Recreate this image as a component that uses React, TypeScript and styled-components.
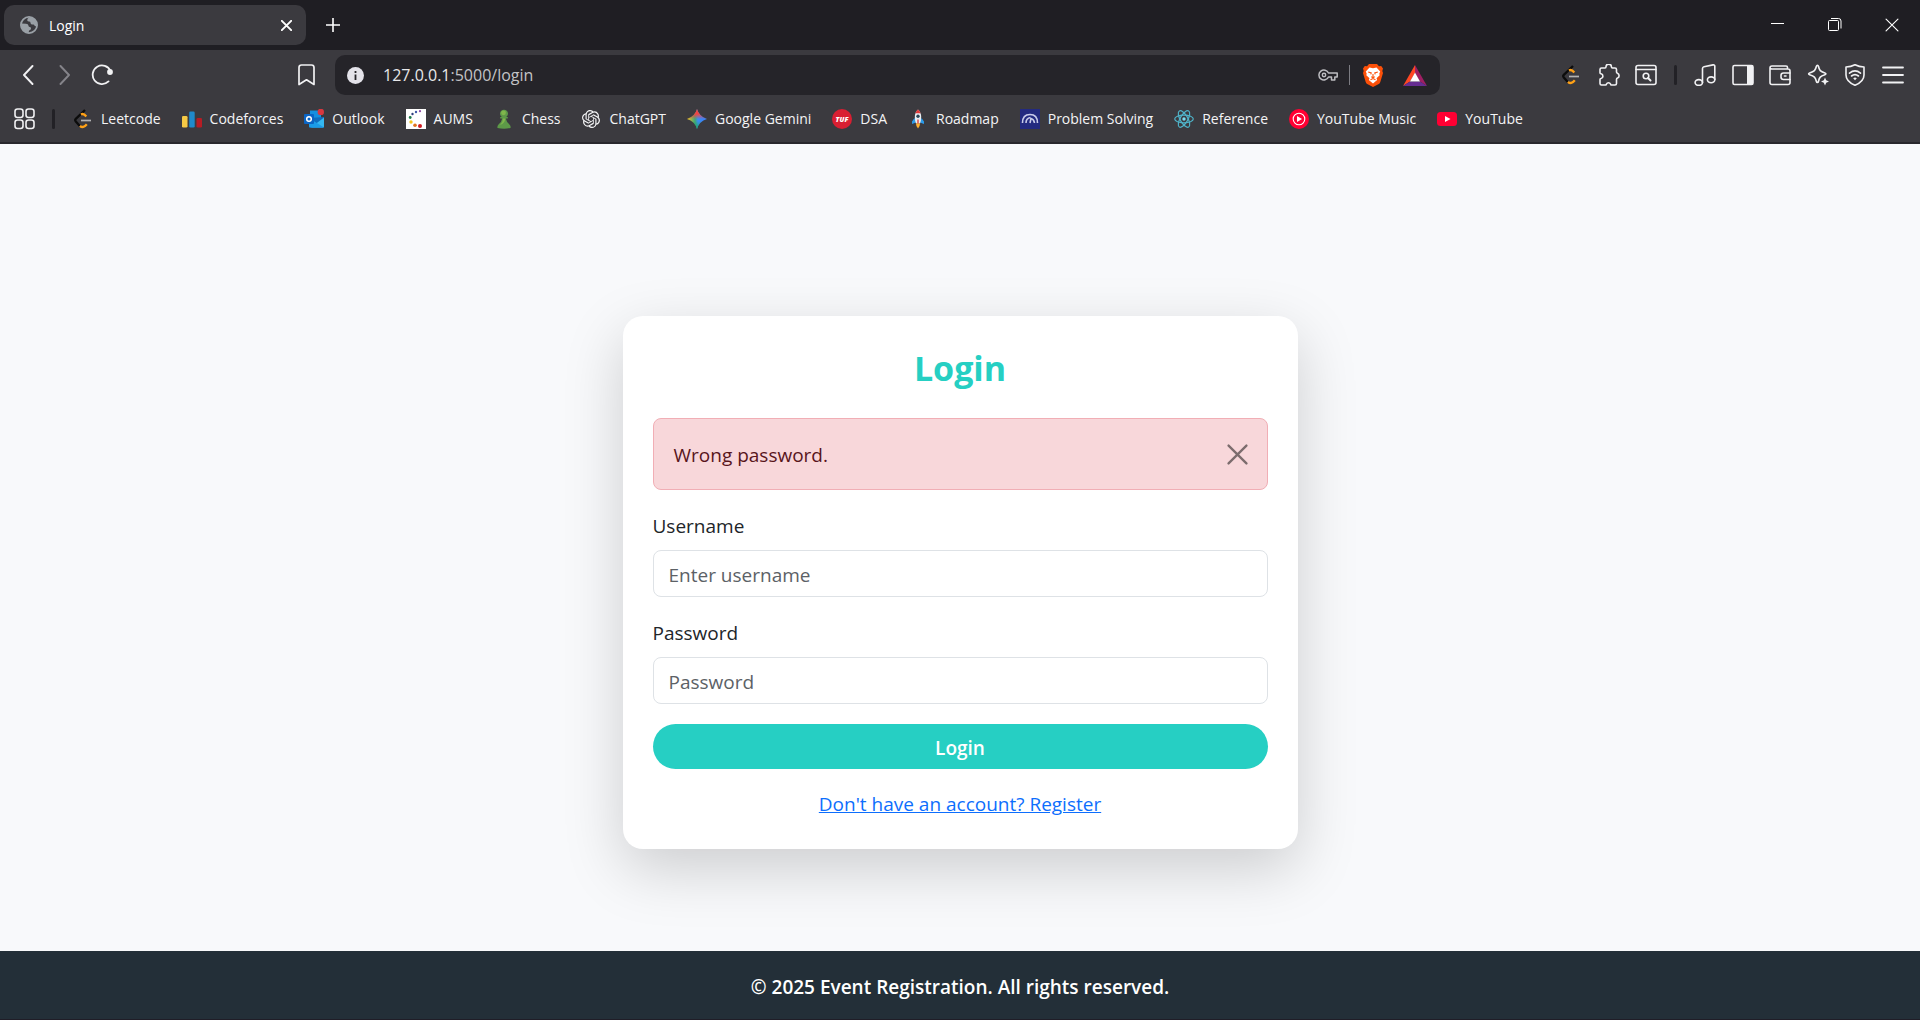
import React, { useState } from "react";
import styled, { createGlobalStyle } from "styled-components";
import { SiOpenai } from "react-icons/si";

const fontStack = `"Open Sans", "Noto Sans", sans-serif`;

const GlobalStyle = createGlobalStyle`
  *, *::before, *::after { box-sizing: border-box; }
  body { margin: 0; background: #f8f9fa; font-family: ${fontStack}; }
  button, input { font: inherit; margin: 0; }
  button { padding: 0; border: 0; background: none; color: inherit; cursor: pointer; }
  svg { display: block; flex: none; }
`;

const Window = styled.div`
  display: flex;
  flex-direction: column;
  min-height: 100vh;
  border-bottom: 1px solid #1f1d27;
`;

/* ---------- browser chrome ---------- */

const TabStrip = styled.div`
  display: flex;
  align-items: center;
  height: 50px;
  padding-left: 4px;
  background: #1f1e23;
  color: #fff;
`;

const Tab = styled.div`
  display: flex;
  align-items: center;
  gap: 11px;
  width: 302px;
  height: 40px;
  padding: 0 12px 0 16px;
  border-radius: 10px;
  background: #3b3a3f;
  font-size: 14px;
`;

const TabTitle = styled.span`
  flex: 1;
`;

const SmallButton = styled.button`
  display: grid;
  place-items: center;
  width: 16px;
  height: 20px;
`;

const NewTabButton = styled.button`
  display: grid;
  place-items: center;
  width: 54px;
  height: 40px;
`;

const WindowControls = styled.div`
  display: flex;
  margin-left: auto;
`;

const WindowButton = styled.button`
  display: grid;
  place-items: center;
  width: 57px;
  height: 50px;
`;

const Toolbar = styled.div`
  display: grid;
  grid-template-columns: 320px 1fr 480px;
  align-items: center;
  height: 50px;
  padding-left: 15px;
  background: #3b3a3f;
  color: #f1f1f3;
`;

const NavGroup = styled.div`
  display: flex;
  align-items: center;
  gap: 11px;
`;

const NavButton = styled.button<{ $dim?: boolean; $end?: boolean }>`
  display: grid;
  place-items: center;
  width: 26px;
  height: 30px;
  color: ${(p) => (p.$dim ? "#85848a" : "#f1f1f3")};
  margin-left: ${(p) => (p.$end ? "auto" : "0")};
  margin-right: ${(p) => (p.$end ? "16px" : "0")};
`;

const AddressBar = styled.div`
  display: flex;
  align-items: center;
  height: 40px;
  padding: 0 13px 0 12px;
  border-radius: 10px;
  background: #252429;
`;

const Url = styled.div`
  flex: 1;
  padding-left: 19px;
  font-size: 16px;
  color: #c3c3c6;
`;

const UrlHost = styled.span`
  color: #e8e8ea;
`;

const AddressActions = styled.div`
  display: flex;
  align-items: center;
  gap: 11px;
`;

const AddressDivider = styled.span`
  width: 1px;
  height: 20px;
  background: #7c7c82;
`;

const Rewards = styled.span`
  padding-left: 7px;
`;

const ToolGroups = styled.div`
  display: flex;
  align-items: center;
  justify-content: flex-end;
  padding-right: 16px;
`;

const ToolGroup = styled.div<{ $width: number }>`
  display: flex;
  justify-content: space-between;
  width: ${(p) => p.$width}px;
`;

const ToolButton = styled.button`
  display: grid;
  place-items: center;
  width: 22px;
  height: 22px;
`;

const Divider = styled.span<{ $gap: number }>`
  width: 3px;
  height: 20px;
  margin: 0 ${(p) => p.$gap}px;
  border-radius: 2px;
  background: #222126;
`;

const BookmarkBar = styled.nav`
  display: flex;
  align-items: center;
  height: 44px;
  padding: 0 14px 4px;
  border-bottom: 2px solid #29282d;
  background: #3b3a3f;
  color: #f1f1f3;
`;

const Bookmarks = styled.div`
  display: flex;
  gap: 21px;
  padding-left: 2px;
`;

const Bookmark = styled.a`
  display: flex;
  align-items: center;
  gap: 8px;
  color: #f4f4f6;
  font-size: 14px;
  line-height: 20px;
  text-decoration: none;
  white-space: nowrap;
`;

const BookmarkIconBox = styled.span`
  display: grid;
  place-items: center;
  width: 20px;
  height: 20px;
`;

/* ---------- login page ---------- */

const Page = styled.main`
  flex: 1;
  display: flex;
  flex-direction: column;
  align-items: center;
  padding: 172px 20px 102px;
  background: #f8f9fb;
  color: #212529;
  font-size: 19px;
  line-height: 30px;
`;

const Card = styled.form`
  width: 100%;
  max-width: 675px;
  padding: 30px;
  border-radius: 20px;
  background: #fff;
  box-shadow: 0 20px 60px rgba(0, 0, 0, 0.176);
`;

const Title = styled.h2`
  margin: 0 0 28px;
  color: #26cfc3;
  font-size: 34px;
  font-weight: 700;
  line-height: 44px;
  text-align: center;
`;

const Alert = styled.div`
  display: flex;
  align-items: center;
  justify-content: space-between;
  padding: 21px 19px 19px 20px;
  margin-bottom: 20px;
  border: 1px solid #f1aeb5;
  border-radius: 8px;
  background: #f8d7da;
  color: #58151c;
`;

const DismissButton = styled.button`
  padding-bottom: 2px;
  color: #7c6c6d;
`;

const Field = styled.div`
  margin-bottom: 20px;
`;

const Label = styled.label`
  display: block;
  padding-top: 1px;
  margin-bottom: 9px;
`;

const Input = styled.input`
  display: block;
  width: 100%;
  height: 47px;
  padding: 2px 15px 0;
  border: 1px solid #dee2e6;
  border-radius: 8px;
  background: #fff;
  color: #212529;
  &::placeholder {
    color: #5c6166;
    opacity: 1;
  }
`;

const SubmitButton = styled.button`
  display: block;
  width: 100%;
  height: 45px;
  padding-top: 2px;
  margin-bottom: 20px;
  border-radius: 24px;
  background: #26cfc3;
  color: #fff;
  font-weight: 600;
`;

const RegisterLine = styled.p`
  margin: 0;
  text-align: center;
`;

const RegisterLink = styled.a`
  color: #0d6efd;
`;

const Footer = styled.footer`
  padding: 21px 20px 17px;
  background: #232f38;
  color: #fff;
  font-size: 19px;
  font-weight: 600;
  line-height: 30px;
  text-align: center;
`;

/* ---------- icons ---------- */

const line = {
  fill: "none",
  stroke: "currentColor",
  strokeWidth: 1.6,
  strokeLinecap: "round" as const,
  strokeLinejoin: "round" as const,
};

const GlobeIcon = () => (
  <svg width="18" height="18" viewBox="0 0 18 18">
    <circle cx="9" cy="9" r="8.100" fill="#3b3a3f" stroke="#9aa0a6" strokeWidth="1.800" />
    <path
      d="M9.500 1Q7 2.500 7.200 4.200 7.500 5.500 9 5.500q1.500 0 1.500 1.300 0 1.500 1.500 1.700h1.500q1 .2 1.200 1.500L17 10.500Q18 3 9.500 1z"
      fill="#9aa0a6"
    />
    <path
      d="M1 7.500l5 .2q2.300.2 2.500 2 .1 1.300 1.400 1.400 1.300.2 1.100 1.600-.3 1.300-1.500 1.500-.8.300-.8 2.800Q1 16.500 1 7.500z"
      fill="#9aa0a6"
    />
  </svg>
);

const CrossIcon = ({ size, width }: { size: number; width: number }) => (
  <svg width={size} height={size} viewBox="0 0 20 20">
    <path d="M1.500 1.500l17 17M18.500 1.500l-17 17" {...line} strokeWidth={width} />
  </svg>
);

const PlusIcon = () => (
  <svg width="14" height="14" viewBox="0 0 14 14">
    <path d="M7 0v14M0 7h14" {...line} strokeLinecap="butt" />
  </svg>
);

const MinimizeIcon = () => (
  <svg width="14" height="14" viewBox="0 0 14 14">
    <path d="M0 5.500h13" stroke="#fff" />
  </svg>
);

const RestoreIcon = () => (
  <svg width="14" height="14" viewBox="0 0 14 14" fill="none" stroke="#fff">
    <rect x=".5" y="2.500" width="10" height="10" rx="1" />
    <path d="M3 .5h7.500q2.500 0 2.500 2.500v7.500" />
  </svg>
);

const BackIcon = ({ flip }: { flip?: boolean }) => (
  <svg width="12" height="20" viewBox="0 0 12 20">
    <path d={flip ? "M1.500 1L10 10l-8.500 9" : "M10.500 1L2 10l8.500 9"} {...line} strokeWidth={1.9} />
  </svg>
);

const ReloadIcon = () => (
  <svg width="22" height="22" viewBox="0 0 22 22">
    <path d="M19.500 7A9.300 9.300 0 1 0 17.500 17.400" {...line} strokeWidth={1.8} />
    <circle cx="19" cy="8" r="2.900" fill="currentColor" />
  </svg>
);

const BookmarkIcon = () => (
  <svg width="17" height="22" viewBox="0 0 17 22">
    <path d="M1 3.500Q1 1 3.500 1h10Q16 1 16 3.500V20.500l-7.500-4.700L1 20.500z" {...line} strokeWidth={1.7} />
  </svg>
);

const InfoIcon = () => (
  <svg width="17" height="17" viewBox="0 0 17 17">
    <circle cx="8.500" cy="8.500" r="8.500" fill="#e4e3ea" />
    <path d="M8.500 7.500v5.500M8.500 4v2" stroke="#252429" strokeWidth="1.800" />
  </svg>
);

const KeyIcon = () => (
  <svg width="20" height="12" viewBox="0 0 20 12">
    <path
      d="M10.500 4A5 5 0 1 0 10.500 8H13.500V11H16.800V8H19.200V4Z"
      {...line}
      stroke="#bdbdc1"
      strokeWidth={1.500}
    />
    <circle cx="6" cy="6" r="1.700" fill="none" stroke="#bdbdc1" strokeWidth="1.400" />
  </svg>
);

const BraveIcon = () => (
  <svg width="24" height="24" viewBox="0 0 24 24">
    <path
      d="M8 1h8l2 2.200 2.200-.2L22 5.500 21.300 8l.7 2-2.700 9q-.4 1.300-1.500 2L12 24l-5.800-3q-1.100-.7-1.500-2L2 10l.7-2L2 5.500 3.800 3l2.200.2z"
      fill="#fb5009"
    />
    <path
      d="M8.500 4.500l3.500.7 3.500-.7 3.700 4-.9 2.200.4 1.600-3.200 2.900.7 1.800L12 20.500 7.800 17l.7-1.800-3.200-2.900.4-1.600-.9-2.200z"
      fill="#fff"
    />
    <path
      d="M7.200 9l3 .9-.4 1.500M16.800 9l-3 .9.4 1.500M12 11v3M10.300 13.600l1.700 1.400 1.700-1.400M9.500 16.800l2.500-1.300 2.500 1.300"
      fill="none"
      stroke="#fb5009"
      strokeWidth="1.100"
    />
  </svg>
);

const RewardsIcon = () => (
  <svg width="24" height="21" viewBox="0 0 24 21">
    <path d="M12 0L0 21 7 16.500 12 8z" fill="#ff4724" />
    <path d="M12 0l12 21-7-4.500L12 8z" fill="#9e1f63" />
    <path d="M0 21l7-4.500h10l7 4.500z" fill="#662d91" />
    <path d="M12 7.500l5 9H7z" fill="#fff" />
  </svg>
);

const LeetcodeIcon = () => (
  <svg width="20" height="20" viewBox="0 0 20 20" fill="none" strokeWidth="2.300">
    <path d="M12 1L2.800 9.800Q1.600 11 2.800 12.500l4 4.500" stroke="#0c0c0c" />
    <path d="M8 5.500q2.500-1.500 5.300 2M7 16.800q3.200 3 6.800-1.500" stroke="#ffa116" />
    <path d="M8 11.500h10" stroke="#b3b3b3" strokeWidth="1.700" />
  </svg>
);

const PuzzleIcon = () => (
  <svg width="22" height="22" viewBox="0 0 22 22">
    <path
      d="M2 5.500Q2 4 3.500 4H7q1 0 1-1.200a2.700 2.700 0 0 1 5.400 0Q13.400 4 14.500 4H17q1.500 0 1.500 1.500V8q0 1 1 1.300a2.600 2.600 0 0 1 0 4.800q-1 .3-1 1.400v4q0 1.500-1.500 1.500H13.400q-.7 0-.9-1a2.200 2.200 0 0 0-4 0q-.2 1-1 1H3.500Q2 21 2 19.500v-4q0-1 1-1a2.400 2.400 0 0 0 0-4.700q-1-.2-1-1z"
      {...line}
    />
  </svg>
);

const SearchPageIcon = () => (
  <svg width="22" height="22" viewBox="0 0 22 22">
    <rect x="1" y="1.500" width="20" height="19" rx="2" {...line} />
    <path d="M1 5.500h20" {...line} />
    <circle cx="11" cy="12" r="2.800" {...line} />
    <path d="M13 14l2.500 2.500" {...line} strokeWidth={2} />
  </svg>
);

const MusicIcon = () => (
  <svg width="22" height="22" viewBox="0 0 22 22">
    <path d="M8.500 18.500V4.500Q8.500 3.200 10 2.800L19 .9q1.800-.3 1.800 1.200V15.500" {...line} />
    <ellipse cx="4.800" cy="18.500" rx="3.700" ry="2.900" {...line} />
    <ellipse cx="17.100" cy="15.800" rx="3.700" ry="2.900" {...line} />
  </svg>
);

const SidebarIcon = () => (
  <svg width="22" height="22" viewBox="0 0 22 22">
    <rect x="1" y="1.500" width="20" height="19" rx="1.500" {...line} />
    <path d="M15 1.500h6v19h-6z" fill="currentColor" />
  </svg>
);

const WalletIcon = () => (
  <svg width="22" height="22" viewBox="0 0 22 22">
    <path d="M18.500 5V3.500Q18.500 2 17 2H3Q1 2 1 4v14.500Q1 20.500 3 20.500h16q2 0 2-2V7q0-2-2-2H3Q1 5 1 3.800" {...line} />
    <path d="M21 9h-6.500Q12 9 12 11.500v1.500q0 2.500 2.500 2.500H21M15.500 12h1.500" {...line} />
  </svg>
);

const SparkleIcon = () => (
  <svg width="22" height="22" viewBox="0 0 22 22">
    <path
      d="M10.400 1.300q.8 0 1 1c1 4.200 1.800 5.200 6.500 6.600 1.300.4 1.300 1.500 0 1.900-4.700 1.400-5.500 2.500-6.500 6.700-.3 1.200-1.700 1.200-2 0-1-4.200-2-5.300-6.800-6.700-1.300-.4-1.300-1.500 0-1.900 4.800-1.400 5.800-2.400 6.800-6.600q.3-1 1-1z"
      {...line}
    />
    <path d="M18 13.500l1.200 2.800 2.800 1.200-2.800 1.200L18 21.500l-1.200-2.800-2.800-1.200 2.800-1.200z" fill="currentColor" />
  </svg>
);

const ShieldIcon = () => (
  <svg width="22" height="22" viewBox="0 0 22 22">
    <path d="M11 .8Q15 3 20 3v8q0 6.500-9 10.300Q2 17.500 2 11V3Q7 3 11 .8z" {...line} />
    <path d="M5.500 9.200q5.500-4.500 11 0M7.500 12q3.500-2.700 7 0" {...line} />
    <path d="M9.200 14.300q1.800-1.500 3.600 0L11 16.300z" fill="currentColor" />
  </svg>
);

const MenuIcon = () => (
  <svg width="22" height="22" viewBox="0 0 22 22">
    <path d="M1 3.500h20M1 11h20M1 18.500h20" {...line} strokeWidth={1.800} />
  </svg>
);

const AppsIcon = () => (
  <svg width="22" height="22" viewBox="0 0 22 22">
    {[1, 12].map((y) =>
      [1, 12].map((x) => <rect key={`${x}-${y}`} x={x} y={y} width="8" height="8.500" rx="2.500" {...line} />)
    )}
  </svg>
);

const CodeforcesIcon = () => (
  <svg width="20" height="20" viewBox="0 0 20 20">
    <rect x="0" y="7" width="5.500" height="11.500" rx="1.300" fill="#f6c945" />
    <rect x="7.200" y="2.500" width="5.500" height="16" rx="1.300" fill="#1f8acb" />
    <rect x="14.500" y="9" width="5.500" height="9.500" rx="1.300" fill="#b71c24" />
  </svg>
);

const OutlookIcon = () => (
  <svg width="20" height="20" viewBox="0 0 20 20">
    <path d="M6 1.500h11v10H6z" fill="#1490df" />
    <path d="M5 9l15-1v9.500q0 1-1 1H6q-1 0-1-1z" fill="#0f6cbd" />
    <path d="M20 8.500v9q0 1-1 1H7z" fill="#35b8f1" />
    <path d="M5 9l15 9.500H6q-1 0-1-1z" fill="#1a9be8" />
    <rect x="0" y="5" width="10" height="10" rx="1" fill="#0a64c4" />
    <circle cx="5" cy="10" r="2.300" fill="none" stroke="#fff" strokeWidth="1.500" />
    <circle cx="16.800" cy="2.900" r="3.200" fill="#d8383f" />
  </svg>
);

const aumsDots: [number, number, number, string][] = [
  [14, 2.2, 1.1, "#8e4aa5"],
  [10, 3, 1.2, "#3e5aa8"],
  [6.5, 5, 1.2, "#2f3f7f"],
  [4.2, 8.5, 1.4, "#1e7a4a"],
  [5, 13, 1.7, "#f3c71b"],
  [9, 16.200, 1.800, "#e0731d"],
  [14, 17, 2, "#cf1b22"],
];

const AumsIcon = () => (
  <svg width="20" height="20" viewBox="0 0 20 20">
    <path d="M0 0h20v20H0z" fill="#fff" />
    {aumsDots.map(([x, y, r, c]) => (
      <circle key={c} cx={x} cy={y} r={r} fill={c} />
    ))}
  </svg>
);

const ChessIcon = () => (
  <svg width="20" height="20" viewBox="0 0 20 20">
    <path d="M6.200 8h1.600a4 4 0 1 1 4.400 0h1.600v1.600h-2q.7 3.800 3.700 6 1.500 1.500 1 3.400-6.500 1.600-13 0-.5-1.900 1-3.400 3-2.200 3.700-6h-2z" fill="#5d9948" />
    <path d="M6 16q3-2.500 3-6.400h2.300Q11 14.500 6 16z" fill="#80b64c" />
    <circle cx="9.500" cy="3.800" r="2.400" fill="#80b64c" />
  </svg>
);

const GeminiIcon = () => (
  <svg width="20" height="20" viewBox="0 0 20 20">
    <defs>
      <linearGradient id="gemBase" x1="0" y1=".5" x2="1" y2=".5">
        <stop offset="0" stopColor="#f9c022" />
        <stop offset=".4" stopColor="#3fa775" />
        <stop offset=".55" stopColor="#3b8bf5" />
        <stop offset="1" stopColor="#3b7df5" />
      </linearGradient>
      <linearGradient id="gemTop" x1="0" y1="0" x2="0" y2="1">
        <stop offset="0" stopColor="#ef4444" />
        <stop offset=".25" stopColor="#ef4444" />
        <stop offset=".5" stopColor="#ef4444" stopOpacity="0" />
        <stop offset=".6" stopColor="#18a95a" stopOpacity="0" />
        <stop offset="1" stopColor="#18a95a" />
      </linearGradient>
    </defs>
    {["gemBase", "gemTop"].map((id) => (
      <path key={id} d="M10 0q2 7.500 10 10-8 2.500-10 10-2-7.500-10-10 8-2.500 10-10z" fill={`url(#${id})`} />
    ))}
  </svg>
);

const TufIcon = () => (
  <svg width="20" height="20" viewBox="0 0 20 20">
    <circle cx="10" cy="10" r="10" fill="#d91f32" />
    <text x="10" y="12.500" fill="#fff" fontSize="7" fontWeight="800" fontStyle="italic" textAnchor="middle">
      TUF
    </text>
  </svg>
);

const RocketIcon = () => (
  <svg width="20" height="20" viewBox="0 0 20 20">
    <path d="M6.500 9L4 12.500V15l4-1.500zM13.500 9l2.500 3.500V15l-4-1.500z" fill="#2b9bea" />
    <path d="M10 .5q3.200 3 3.200 7.500 0 4-1.200 6.500H8Q6.800 12 6.800 8 6.800 3.500 10 .5z" fill="#e9eef2" />
    <path d="M10 .5q2 1.500 2.600 3.800H7.400Q8 2 10 .5z" fill="#e03a3a" />
    <circle cx="10" cy="7.200" r="1.700" fill="#2a4658" />
    <path d="M9.300 10.500h1.400V15H9.300z" fill="#d94343" />
    <path d="M8 14.500h4q0 3-2 5-2-2-2-5z" fill="#ffb02e" />
  </svg>
);

const ProblemIcon = () => (
  <svg width="20" height="20" viewBox="0 0 20 20">
    <path d="M0 0h20v20H0z" fill="#232a80" />
    <path
      d="M2.500 14q0-8.500 7.500-8.500t7.500 8.500M6 14q0-4.800 4.500-5.500M10 14l1-4.500q3 .8 3.500 4.500"
      fill="none"
      stroke="#c8cbea"
      strokeWidth="1.600"
    />
  </svg>
);

const ReactIcon = () => (
  <svg width="20" height="20" viewBox="0 0 20 20" fill="none" stroke="#4fb3c9" strokeWidth="1.200">
    {[0, 60, 120].map((angle) => (
      <ellipse key={angle} cx="10" cy="10" rx="9.300" ry="3.800" transform={`rotate(${angle} 10 10)`} />
    ))}
    <circle cx="10" cy="10" r="1.700" fill="#7adcf0" stroke="none" />
  </svg>
);

const YouTubeMusicIcon = () => (
  <svg width="20" height="20" viewBox="0 0 20 20">
    <circle cx="10" cy="10" r="10" fill="#ff0033" />
    <circle cx="10" cy="10" r="5.800" fill="none" stroke="#fff" strokeWidth="1.100" />
    <path d="M8 7l5 3-5 3z" fill="#fff" />
  </svg>
);

const YouTubeIcon = () => (
  <svg width="20" height="20" viewBox="0 0 20 20">
    <rect y="3" width="20" height="14" rx="3.500" fill="#ff0033" />
    <path d="M8 7l5.500 3L8 13z" fill="#fff" />
  </svg>
);

const bookmarks: { name: string; icon: React.ReactNode }[] = [
  { name: "Leetcode", icon: <LeetcodeIcon /> },
  { name: "Codeforces", icon: <CodeforcesIcon /> },
  { name: "Outlook", icon: <OutlookIcon /> },
  { name: "AUMS", icon: <AumsIcon /> },
  { name: "Chess", icon: <ChessIcon /> },
  { name: "ChatGPT", icon: <SiOpenai size={18} /> },
  { name: "Google Gemini", icon: <GeminiIcon /> },
  { name: "DSA", icon: <TufIcon /> },
  { name: "Roadmap", icon: <RocketIcon /> },
  { name: "Problem Solving", icon: <ProblemIcon /> },
  { name: "Reference", icon: <ReactIcon /> },
  { name: "YouTube Music", icon: <YouTubeMusicIcon /> },
  { name: "YouTube", icon: <YouTubeIcon /> },
];

const extensionTools = [
  { name: "Leetcode extension", icon: <LeetcodeIcon /> },
  { name: "Extensions", icon: <PuzzleIcon /> },
  { name: "Search tabs", icon: <SearchPageIcon /> },
];

const browserTools = [
  { name: "Media", icon: <MusicIcon /> },
  { name: "Sidebar", icon: <SidebarIcon /> },
  { name: "Wallet", icon: <WalletIcon /> },
  { name: "Assistant", icon: <SparkleIcon /> },
  { name: "VPN", icon: <ShieldIcon /> },
  { name: "Menu", icon: <MenuIcon /> },
];

function BrowserChrome() {
  return (
    <header>
      <TabStrip>
        <Tab>
          <GlobeIcon />
          <TabTitle>Login</TabTitle>
          <SmallButton aria-label="Close tab">
            <CrossIcon size={11} width={3.500} />
          </SmallButton>
        </Tab>
        <NewTabButton aria-label="New tab">
          <PlusIcon />
        </NewTabButton>
        <WindowControls>
          <WindowButton aria-label="Minimize">
            <MinimizeIcon />
          </WindowButton>
          <WindowButton aria-label="Restore">
            <RestoreIcon />
          </WindowButton>
          <WindowButton aria-label="Close">
            <CrossIcon size={14} width={1.600} />
          </WindowButton>
        </WindowControls>
      </TabStrip>
      <Toolbar>
        <NavGroup>
          <NavButton aria-label="Back">
            <BackIcon />
          </NavButton>
          <NavButton aria-label="Forward" $dim>
            <BackIcon flip />
          </NavButton>
          <NavButton aria-label="Reload">
            <ReloadIcon />
          </NavButton>
          <NavButton aria-label="Bookmark this page" $end>
            <BookmarkIcon />
          </NavButton>
        </NavGroup>
        <AddressBar>
          <InfoIcon />
          <Url>
            <UrlHost>127.0.0.1</UrlHost>:5000/login
          </Url>
          <AddressActions>
            <KeyIcon />
            <AddressDivider />
            <BraveIcon />
            <Rewards>
              <RewardsIcon />
            </Rewards>
          </AddressActions>
        </AddressBar>
        <ToolGroups>
          <ToolGroup $width={97}>
            {extensionTools.map((t) => (
              <ToolButton key={t.name} aria-label={t.name}>
                {t.icon}
              </ToolButton>
            ))}
          </ToolGroup>
          <Divider $gap={17} />
          <ToolGroup $width={210}>
            {browserTools.map((t) => (
              <ToolButton key={t.name} aria-label={t.name}>
                {t.icon}
              </ToolButton>
            ))}
          </ToolGroup>
        </ToolGroups>
      </Toolbar>
      <BookmarkBar aria-label="Bookmarks">
        <ToolButton aria-label="Apps">
          <AppsIcon />
        </ToolButton>
        <Divider $gap={16} />
        <Bookmarks>
          {bookmarks.map((b) => (
            <Bookmark key={b.name} href="#">
              <BookmarkIconBox>{b.icon}</BookmarkIconBox>
              {b.name}
            </Bookmark>
          ))}
        </Bookmarks>
      </BookmarkBar>
    </header>
  );
}

export default function App() {
  const [alertOpen, setAlertOpen] = useState(true);
  return (
    <Window>
      <GlobalStyle />
      <BrowserChrome />
      <Page>
        <Card onSubmit={(e) => e.preventDefault()}>
          <Title>Login</Title>
          {alertOpen && (
            <Alert role="alert">
              Wrong password.
              <DismissButton type="button" aria-label="Close" onClick={() => setAlertOpen(false)}>
                <CrossIcon size={21} width={2.200} />
              </DismissButton>
            </Alert>
          )}
          <Field>
            <Label htmlFor="username">Username</Label>
            <Input id="username" type="text" placeholder="Enter username" />
          </Field>
          <Field>
            <Label htmlFor="password">Password</Label>
            <Input id="password" type="password" placeholder="Password" />
          </Field>
          <SubmitButton type="submit">Login</SubmitButton>
          <RegisterLine>
            <RegisterLink href="#register">Don't have an account? Register</RegisterLink>
          </RegisterLine>
        </Card>
      </Page>
      <Footer>© 2025 Event Registration. All rights reserved.</Footer>
    </Window>
  );
}
